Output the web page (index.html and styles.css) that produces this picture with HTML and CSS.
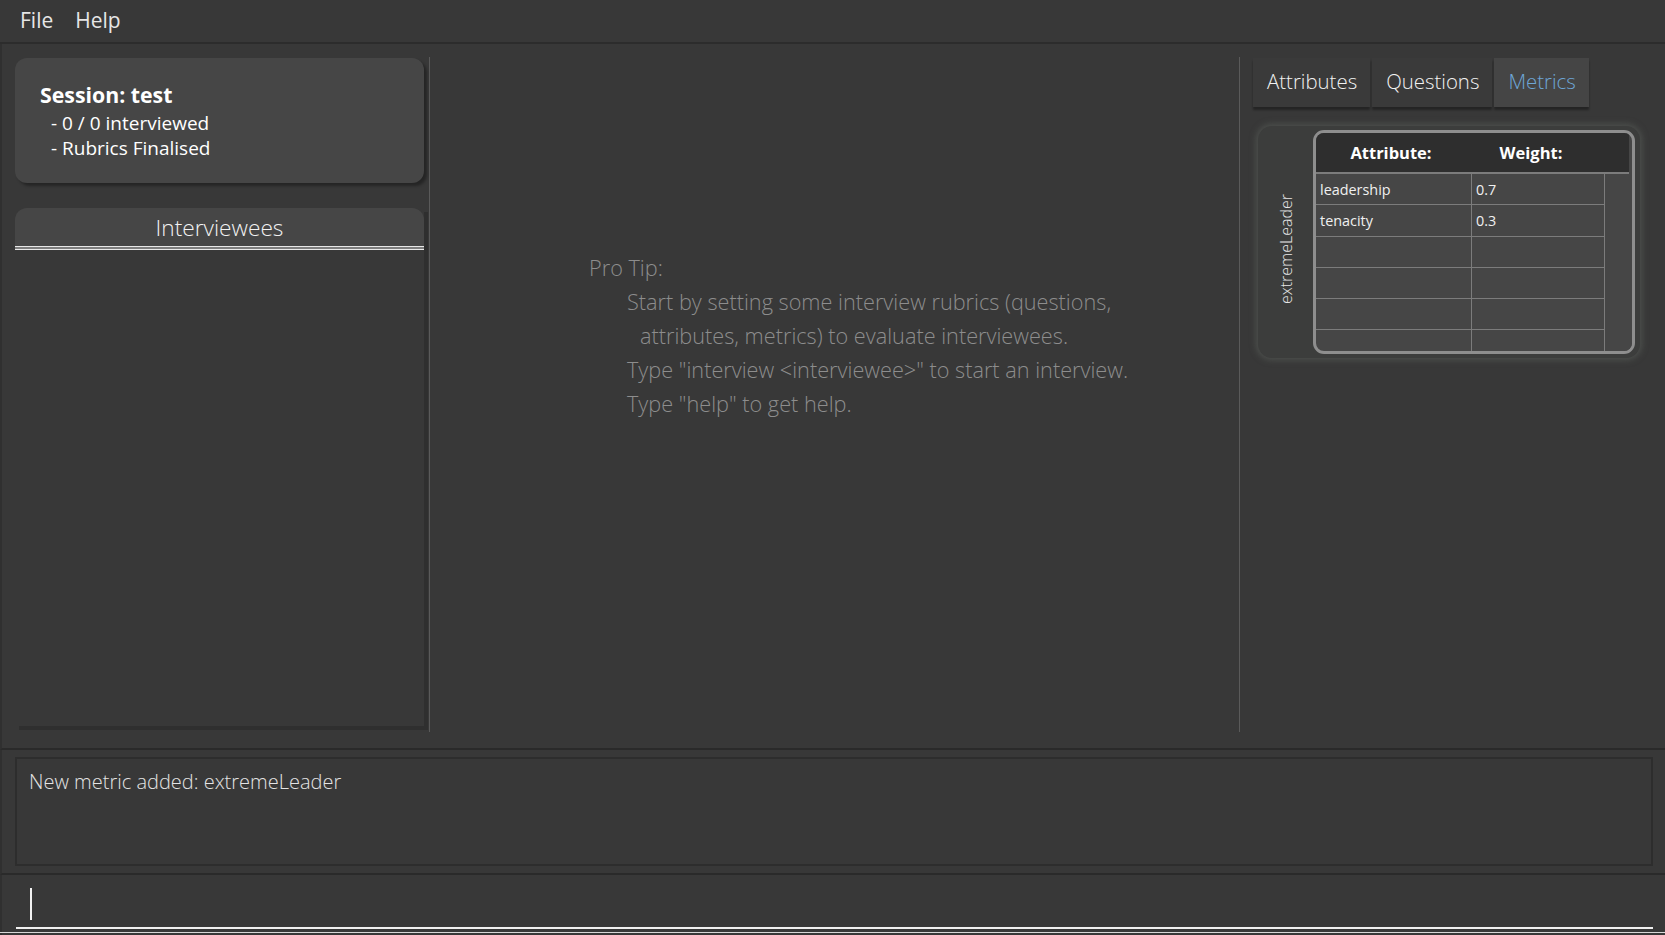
FILE: index.html
```html
<!DOCTYPE html>
<html>
<head>
<meta charset="utf-8">
<link rel="stylesheet" href="styles.css">
</head>
<body>
<div class="app">
  <div class="menubar">
    <span class="menu-item">File</span>
    <span class="menu-item">Help</span>
  </div>
  <div class="main">
    <div class="left">
      <div class="session-card">
        <div class="session-title">Session: test</div>
        <div class="session-line">- 0 / 0 interviewed</div>
        <div class="session-line">- Rubrics Finalised</div>
      </div>
      <div class="list-panel">
        <div class="list-header">Interviewees</div>
        <div class="list-rule"></div>
        <div class="list-body"></div>
      </div>
    </div>
    <div class="center">
      <div class="tip">
        <div class="tip-title">Pro Tip:</div>
        <div class="tip-line">Start by setting some interview rubrics (questions,</div>
        <div class="tip-line tip-indent">attributes, metrics) to evaluate interviewees.</div>
        <div class="tip-line">Type "interview &lt;interviewee&gt;" to start an interview.</div>
        <div class="tip-line">Type "help" to get help.</div>
      </div>
    </div>
    <div class="right">
      <div class="tabs">
        <div class="tab">Attributes</div>
        <div class="tab">Questions</div>
        <div class="tab tab-active">Metrics</div>
      </div>
      <div class="metric-card">
        <div class="metric-label"><span>extremeLeader</span></div>
        <div class="metric-table">
          <div class="thead">
            <div class="th">Attribute:</div>
            <div class="th">Weight:</div>
            <div class="th-fill"></div>
          </div>
          <div class="tbody">
            <div class="rows">
              <div class="row"><div class="cell c1">leadership</div><div class="cell c2">0.7</div></div>
              <div class="row"><div class="cell c1">tenacity</div><div class="cell c2">0.3</div></div>
              <div class="row"><div class="cell c1"></div><div class="cell c2"></div></div>
              <div class="row"><div class="cell c1"></div><div class="cell c2"></div></div>
              <div class="row"><div class="cell c1"></div><div class="cell c2"></div></div>
              <div class="row last"><div class="cell c1"></div><div class="cell c2"></div></div>
            </div>
            <div class="scroll-col"></div>
          </div>
        </div>
      </div>
    </div>
  </div>
  <div class="result-pane">
    <div class="result-box">New metric added: extremeLeader</div>
  </div>
  <div class="command-pane">
    <div class="cmd-box"><span class="caret"></span></div>
    <div class="cmd-rule"></div>
  </div>
</div>
</body>
</html>
```
FILE: styles.css
```css
* { box-sizing: border-box; }
html, body { margin: 0; padding: 0; }
body {
  background: #383838;
  font-family: "Open Sans", "Noto Sans", sans-serif;
  color: #ffffff;
  overflow: hidden;
}
.app {
  width: 1665px;
  height: 935px;
  display: flex;
  flex-direction: column;
  overflow: hidden;
  background: #383838;
}
.menubar {
  height: 44px;
  flex: none;
  display: flex;
  align-items: center;
  gap: 22px;
  padding: 0 0 2px 20px;
  border-bottom: 2px solid #2c2c2c;
}
.menu-item {
  font-size: 21px;
  color: #e6e6e6;
  font-weight: 400;
}
.main {
  height: 706px;
  flex: none;
  display: flex;
  padding: 13px 0 16px 0;
  border-left: 2px solid #303030;
  border-bottom: 2px solid #2a2a2a;
}
.left {
  width: 428px;
  flex: none;
  display: flex;
  flex-direction: column;
  padding: 1px 5px 0 13px;
  border-right: 1px solid #5a5a5a;
}
.session-card {
  height: 125px;
  flex: none;
  background: #464646;
  border-radius: 12px;
  box-shadow: 3px 3px 3px rgba(0,0,0,0.35);
  padding: 20px 24px 18px 25px;
}
.session-title {
  font-size: 21.3px;
  font-weight: 700;
  line-height: 33px;
  color: #ffffff;
}
.session-line {
  font-size: 19px;
  line-height: 24.5px;
  padding-left: 11px;
  color: #ffffff;
}
.list-panel {
  flex: 1;
  display: flex;
  flex-direction: column;
  margin-top: 25px;
  margin-bottom: 6px;
  box-shadow: 4px 4px 0 #2f2f2f;
}
.list-header {
  height: 38px;
  flex: none;
  background: #464646;
  border-radius: 12px 12px 0 0;
  text-align: center;
  font-size: 22.7px;
  font-weight: 300;
  line-height: 40px;
  color: #f2f2f2;
}
.list-rule {
  height: 4px;
  flex: none;
  background: #7d7d7d;
  border-top: 1px solid #e8e8e8;
  border-bottom: 1px solid #e8e8e8;
}
.list-body {
  flex: 1;
  background: #383838;
}
.center {
  width: 810px;
  flex: none;
  border-right: 1px solid #5a5a5a;
  padding: 194px 0 0 159px;
}
.tip {
  color: #8d8d8d;
  font-size: 21.7px;
  font-weight: 300;
  line-height: 34px;
}
.tip-line { padding-left: 38px; }
.tip-indent { padding-left: 51px; }
.right {
  flex: 1;
  padding: 1px 0 0 13px;
}
.tabs {
  display: flex;
  gap: 2px;
  height: 51px;
}
.tab {
  height: 49px;
  padding: 0 13px 0 14px;
  background: #3a3a3a;
  box-shadow: 0 3px 2px rgba(0,0,0,0.35);
  font-size: 20.4px;
  font-weight: 300;
  line-height: 46px;
  color: #f2f2f2;
}
.tab-active {
  background: #454545;
  color: #6ea6d6;
}
.metric-card {
  margin: 17px 0 0 5px;
  width: 382px;
  height: 232px;
  background: #3c3d3c;
  border-radius: 14px;
  box-shadow: 0 0 6px 2px rgba(95,100,95,0.55);
  display: flex;
  padding: 4px 5px 4px 0;
}
.metric-label {
  width: 55px;
  flex: none;
  display: flex;
  align-items: center;
  justify-content: center;
  padding-top: 14px;
}
.metric-label span {
  writing-mode: vertical-rl;
  transform: rotate(180deg);
  font-size: 16px;
  font-weight: 300;
  color: #e8e8e8;
}
.metric-table {
  flex: 1;
  border: 3px solid #8e8e8e;
  border-radius: 11px;
  overflow: hidden;
  display: flex;
  flex-direction: column;
  background: #464646;
}
.thead {
  height: 41px;
  flex: none;
  display: flex;
  background: #2e2e2e;
  border-bottom: 2px solid #7c7c7c;
  margin-right: 3px;
}
.th {
  font-size: 16.5px;
  font-weight: 700;
  line-height: 40px;
  text-align: center;
  color: #ffffff;
}
.th:nth-child(1) { width: 146px; margin-left: 2px; }
.th:nth-child(2) { width: 134px; }
.th-fill { flex: 1; }
.tbody {
  flex: 1;
  display: flex;
  min-height: 0;
}
.rows {
  width: 289px;
  flex: none;
  display: flex;
  flex-direction: column;
  border-right: 1px solid #7c7c7c;
}
.row {
  height: 31.3px;
  flex: none;
  display: flex;
  border-bottom: 1px solid #7c7c7c;
}
.row.last { flex: 1; border-bottom: none; }
.cell {
  font-size: 14.4px;
  line-height: 32px;
  padding-left: 4px;
  color: #f0f0f0;
}
.c1 { width: 156px; border-right: 1px solid #7c7c7c; }
.c2 { flex: 1; }
.scroll-col { flex: 1; background: #464646; }
.result-pane {
  height: 125px;
  flex: none;
  padding: 7px 12px 7px 13px;
  border-left: 2px solid #303030;
  border-bottom: 2px solid #2a2a2a;
}
.result-box {
  height: 100%;
  border: 2px solid #2d2d2d;
  padding: 9px 12px;
  font-size: 20px;
  font-weight: 300;
  color: #e4e4e4;
}
.command-pane {
  flex: 1;
  padding: 13px 12px 0 14px;
  border-left: 2px solid #303030;
}
.cmd-box {
  height: 41px;
  border-bottom: 2px solid #f0f0f0;
  padding-left: 14px;
}
.caret {
  display: block;
  width: 2px;
  height: 32px;
  background: #f2f2f2;
}
.cmd-rule {
  height: 1px;
  margin: 3px -12px 0 -16px;
  background: #d8d8d8;
}
```
